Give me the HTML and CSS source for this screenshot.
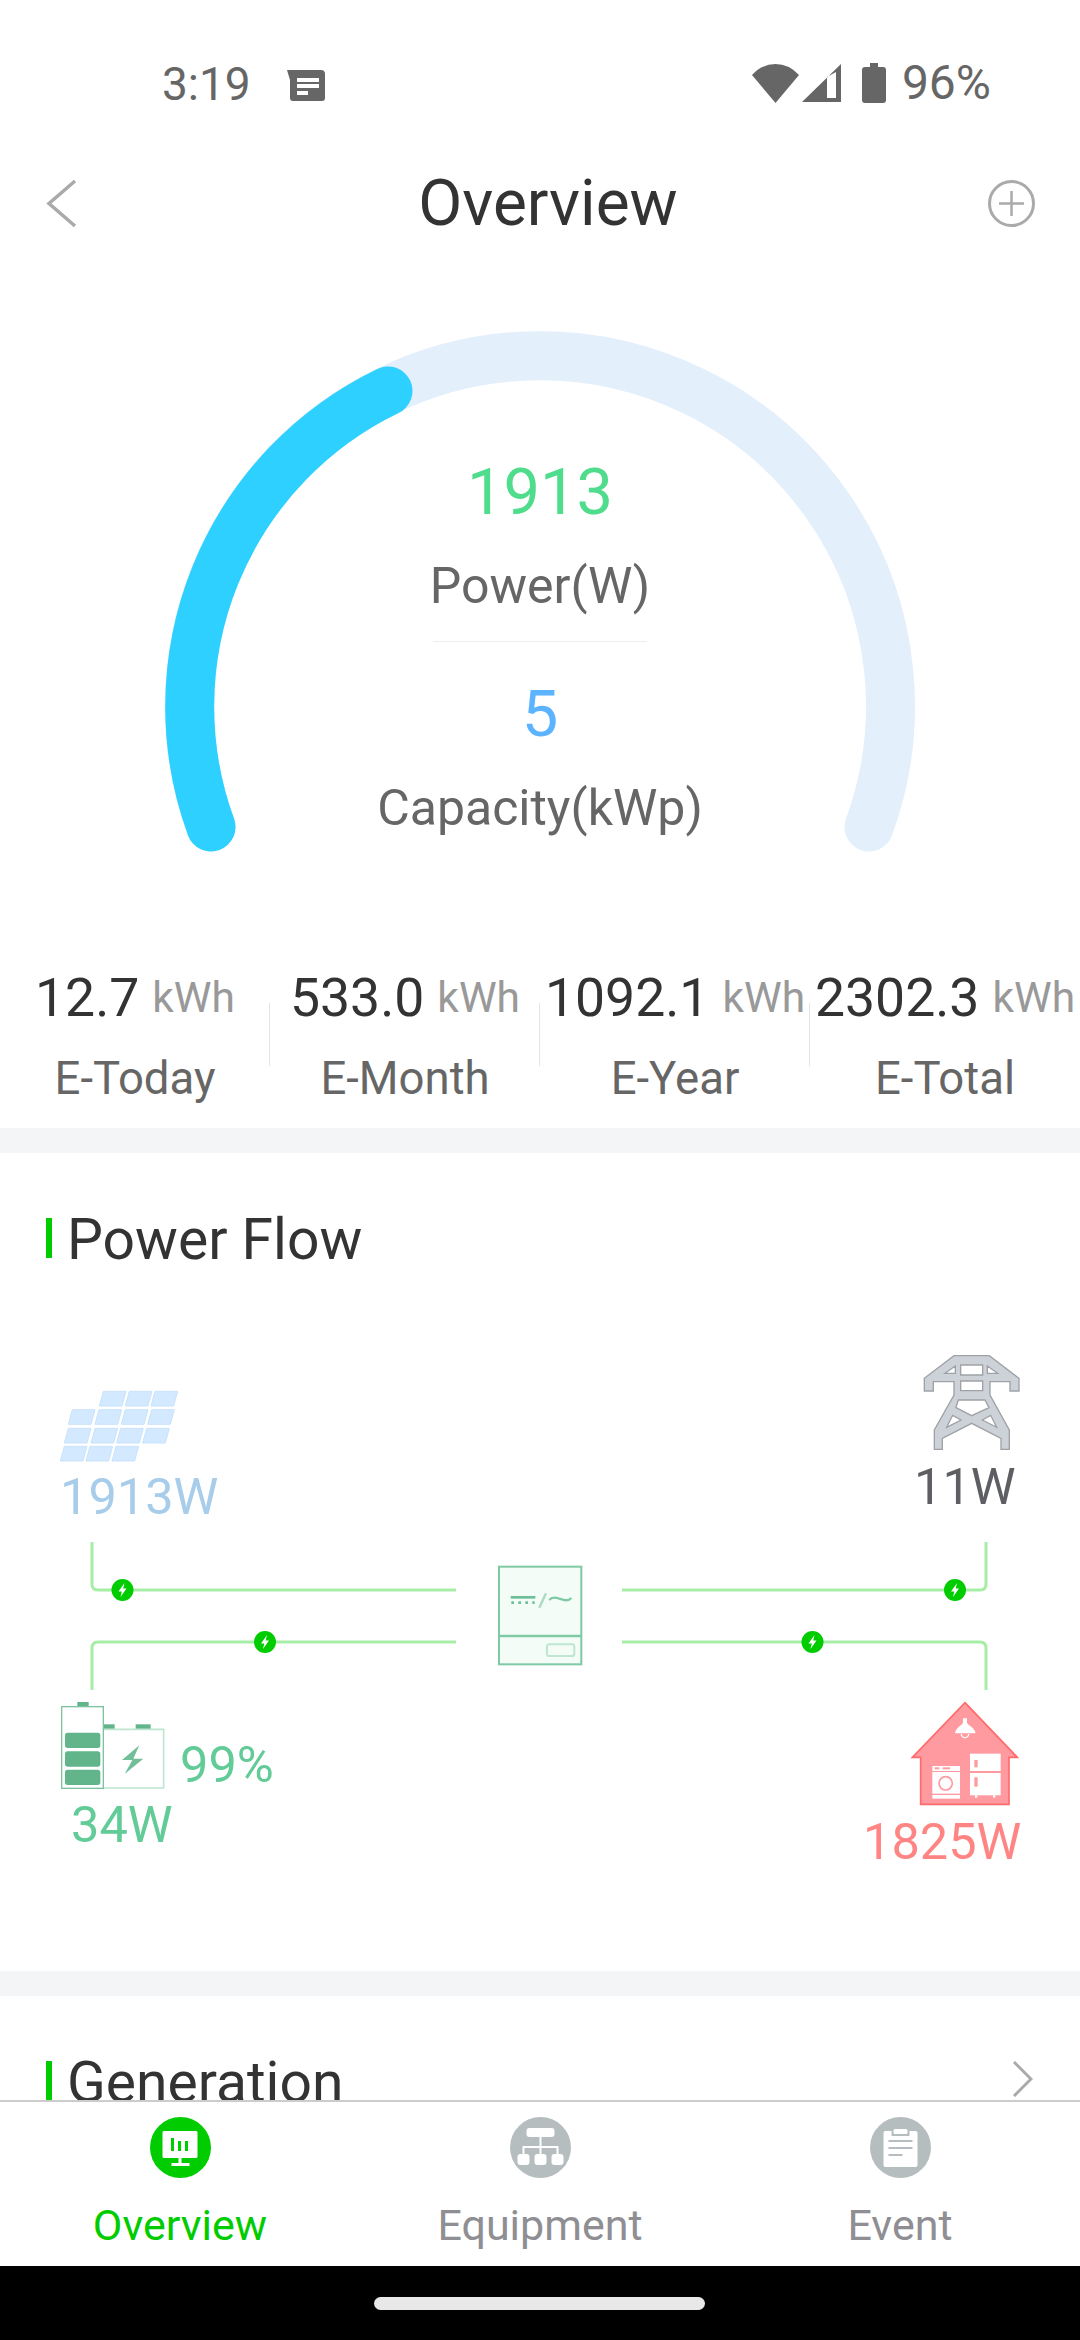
FILE: index.html
```html
<!DOCTYPE html>
<html lang="en">
<head>
    <meta charset="UTF-8">
    <meta name="viewport" content="width=device-width, initial-scale=1.0">
    <title>Overview</title>
    <link rel="stylesheet" href="styles.css">
</head>
<body>
    <div class="app">
        <div class="status-bar">
            <span class="status-time">3:19</span>
            <svg class="status-note" width="38" height="31" viewBox="0 0 38 31">
                <path d="M0 0H34Q38 0 38 4V28Q38 31 35 31H6Q3 31 3 28V10Z" fill="#666"/>
                <rect x="10" y="8" width="22" height="4" fill="#fff"/>
                <rect x="10" y="14" width="22" height="4" fill="#fff"/>
                <rect x="10" y="21" width="11" height="4" fill="#fff"/>
            </svg>
            <div class="status-right">
                <svg width="47" height="39" viewBox="0 0 47 39"><path d="M23.5 39L0 11Q10 0 23.5 0T47 11Z" fill="#666"/></svg>
                <svg width="39" height="38" viewBox="0 0 39 38"><path fill-rule="evenodd" d="M39 0V38H0ZM25 13V34H34V8Z" fill="#666"/></svg>
                <svg width="24" height="40" viewBox="0 0 24 40"><path d="M8 0H16V4H21Q24 4 24 7V37Q24 40 21 40H3Q0 40 0 37V7Q0 4 3 4H8Z" fill="#666"/></svg>
                <span class="status-battery">96%</span>
            </div>
        </div>

        <header class="nav-bar">
            <svg class="nav-back" width="31" height="49" viewBox="0 0 31 49"><path d="M29 2L3 24.5L29 47" fill="none" stroke="#aaa" stroke-width="3.5"/></svg>
            <h1>Overview</h1>
            <svg class="nav-add" width="47" height="47" viewBox="0 0 47 47">
                <circle cx="23.5" cy="23.5" r="22" fill="none" stroke="#aaa" stroke-width="3"/>
                <path d="M23.5 11V36M11 23.5H36" stroke="#aaa" stroke-width="2.5"/>
            </svg>
        </header>

        <main class="content">
            <section class="gauge">
                <svg class="gauge-arc" width="1080" height="667" viewBox="0 263 1080 667">
                    <path d="M211 827A350.5 350.5 0 1 1 869 827" fill="none" stroke="#e4effc" stroke-width="49" stroke-linecap="round"/>
                    <path d="M211 827A350.5 350.5 0 0 1 388 391" fill="none" stroke="#2dd0ff" stroke-width="49" stroke-linecap="round"/>
                </svg>
                <div class="gauge-value gauge-power">1913</div>
                <div class="gauge-label gauge-label-power">Power(W)</div>
                <div class="gauge-line"></div>
                <div class="gauge-value gauge-capacity">5</div>
                <div class="gauge-label gauge-label-capacity">Capacity(kWp)</div>
            </section>

            <section class="stats">
                <div class="stat">
                    <div class="stat-value">12.7<span class="stat-unit">kWh</span></div>
                    <div class="stat-label">E-Today</div>
                </div>
                <div class="stat">
                    <div class="stat-value">533.0<span class="stat-unit">kWh</span></div>
                    <div class="stat-label">E-Month</div>
                </div>
                <div class="stat">
                    <div class="stat-value">1092.1<span class="stat-unit">kWh</span></div>
                    <div class="stat-label">E-Year</div>
                </div>
                <div class="stat">
                    <div class="stat-value">2302.3<span class="stat-unit">kWh</span></div>
                    <div class="stat-label">E-Total</div>
                </div>
            </section>

            <section class="panel panel-flow">
                <h2 class="panel-title">Power Flow</h2>
                <div class="flow-canvas">
                    <svg class="flow-lines" width="1080" height="560" viewBox="0 1300 1080 560">
                        <defs>
                            <g id="bolt">
                                <circle r="11" fill="#00cc00"/>
                                <path d="M2-7L-4 1.5H-.7L-2 7L4-1.5H.7Z" fill="#fff"/>
                            </g>
                            <polygon id="cell" points="12,0 80,0 68,44 0,44" fill="#d3e9ff" stroke="#c9e2f9" stroke-width="3" stroke-linejoin="round"/>
                        </defs>

                        <!-- lines -->
                        <g fill="none" stroke="#a6eda6" stroke-width="3">
                            <path d="M92 1542V1584Q92 1590 98 1590H456"/>
                            <path d="M986 1542V1584Q986 1590 980 1590H622"/>
                            <path d="M92 1690V1648Q92 1642 98 1642H456"/>
                            <path d="M986 1690V1648Q986 1642 980 1642H622"/>
                        </g>
                        <use href="#bolt" x="122.5" y="1590"/>
                        <use href="#bolt" x="955" y="1590"/>
                        <use href="#bolt" x="265" y="1642"/>
                        <use href="#bolt" x="812.5" y="1642"/>

                        <!-- solar -->
                        <g transform="translate(30 1340) scale(.3333)">
                            <use href="#cell" x="208" y="154"/>
                            <use href="#cell" x="286" y="154"/>
                            <use href="#cell" x="363" y="154"/>
                            <use href="#cell" x="115" y="209"/>
                            <use href="#cell" x="195" y="209"/>
                            <use href="#cell" x="274" y="209"/>
                            <use href="#cell" x="353" y="209"/>
                            <use href="#cell" x="103" y="265"/>
                            <use href="#cell" x="183" y="265"/>
                            <use href="#cell" x="260" y="265"/>
                            <use href="#cell" x="338" y="265"/>
                            <use href="#cell" x="91" y="319"/>
                            <use href="#cell" x="168" y="319"/>
                            <use href="#cell" x="246" y="319"/>
                        </g>

                        <!-- grid tower -->
                        <g transform="translate(880 1340) scale(.3333)">
                            <path fill-rule="evenodd" fill="#cdd2d8" stroke="#9ea2a6" stroke-width="4" d="M222 47H328L417 115V153H390V125H330V165L388 270V328H363V295L275 250L187 295V328H163V270L222 165V125H160V153H133V115ZM242 75V105H308V75ZM242 123V152H308V123ZM195 100H226V78ZM322 78V100H353ZM235 180L228 203L275 227L327 203L315 180ZM200 262L243 240L218 226ZM307 240L350 262L332 226Z"/>
                        </g>

                        <!-- inverter -->
                        <g transform="translate(440 1540) scale(.3333)">
                            <rect x="177" y="80" width="247" height="293" fill="#f3fcf7" stroke="#7fc9a5" stroke-width="6"/>
                            <path d="M177 288H424" stroke="#7fc9a5" stroke-width="7"/>
                            <rect x="321" y="313" width="82" height="35" rx="7" fill="none" stroke="#bfe6d2" stroke-width="6"/>
                            <rect x="212" y="168" width="74" height="8" fill="#6fc09a"/>
                            <path d="M214 188H284" stroke="#6fc09a" stroke-width="8" stroke-dasharray="8 13"/>
                            <path d="M318 160L298 203" stroke="#a8dcc2" stroke-width="7"/>
                            <path d="M328 180C345 158 375 195 394 174" fill="none" stroke="#7fc9a5" stroke-width="7"/>
                        </g>

                        <!-- battery -->
                        <g transform="translate(40 1680) scale(.3333)">
                            <rect x="190" y="133" width="34" height="15" fill="#62b48b"/>
                            <rect x="287" y="133" width="45" height="15" fill="#62b48b"/>
                            <rect x="112" y="66" width="34" height="14" fill="#62b48b"/>
                            <path d="M190 148H371V324H190" fill="none" stroke="#bde6d0" stroke-width="5"/>
                            <rect x="65" y="80" width="125" height="245" fill="#fff" stroke="#7cc3a0" stroke-width="4"/>
                            <rect x="75" y="158" width="106" height="46" rx="8" fill="#62b48b"/>
                            <rect x="75" y="214" width="106" height="46" rx="8" fill="#62b48b"/>
                            <rect x="75" y="269" width="106" height="46" rx="8" fill="#62b48b"/>
                            <path d="M298 196L246 240H277L254 282L310 236H280Z" fill="#72c09a"/>
                        </g>

                        <!-- house -->
                        <g transform="translate(840 1680) scale(.3333)">
                            <path d="M375 68L532 232H507V373H242V232H217Z" fill="#ff9aa0" stroke="#ff6a6a" stroke-width="5"/>
                            <path d="M345 160C348 142 366 136 369 128V115H381V128C384 136 404 142 407 160Z" fill="#fff"/>
                            <path d="M364 162A11 11 0 0 0 386 162" fill="none" stroke="#fff" stroke-width="4"/>
                            <rect x="390" y="221" width="92" height="52" fill="#fff"/>
                            <rect x="390" y="279" width="92" height="67" fill="#fff"/>
                            <rect x="403" y="240" width="10" height="22" fill="#ff9aa0"/>
                            <rect x="403" y="292" width="10" height="28" fill="#ff9aa0"/>
                            <rect x="405" y="346" width="7" height="7" fill="#fff"/>
                            <rect x="459" y="346" width="7" height="7" fill="#fff"/>
                            <rect x="277" y="258" width="83" height="15" fill="#fff"/>
                            <rect x="284" y="262" width="14" height="6" fill="#ff9aa0"/>
                            <rect x="308" y="262" width="22" height="6" fill="#ff9aa0"/>
                            <rect x="277" y="276" width="83" height="65" fill="#fff"/>
                            <rect x="277" y="345" width="83" height="11" fill="#fff"/>
                            <circle cx="317" cy="310" r="20" fill="none" stroke="#ff9aa0" stroke-width="5"/>
                        </g>
                    </svg>

                    <span class="flow-value flow-solar">1913W</span>
                    <span class="flow-value flow-grid">11W</span>
                    <span class="flow-value flow-soc">99%</span>
                    <span class="flow-value flow-battery">34W</span>
                    <span class="flow-value flow-load">1825W</span>
                </div>
            </section>

            <section class="panel">
                <div class="panel-head">
                    <h2 class="panel-title">Generation</h2>
                    <svg width="21" height="36" viewBox="0 0 21 36"><path d="M2 1L19 18L2 35" fill="none" stroke="#aaa" stroke-width="3"/></svg>
                </div>
            </section>
        </main>

        <nav class="tab-bar">
            <div class="tab tab-active">
                <svg width="61" height="61" viewBox="0 0 61 61">
                    <circle cx="30.5" cy="30.5" r="30.5" fill="#00cc00"/>
                    <rect x="12.5" y="14" width="35" height="27" rx="1.5" fill="#fff"/>
                    <rect x="28.5" y="41" width="3" height="5" fill="#fff"/>
                    <rect x="21.5" y="46" width="18" height="3" fill="#fff"/>
                    <rect x="21" y="21" width="3" height="13" fill="#00cc00"/>
                    <rect x="28" y="24" width="3" height="10" fill="#00cc00"/>
                    <rect x="35" y="24" width="3" height="10" fill="#00cc00"/>
                </svg>
                <span>Overview</span>
            </div>
            <div class="tab">
                <svg width="61" height="61" viewBox="0 0 61 61">
                    <circle cx="30.5" cy="30.5" r="30.5" fill="#b5bdbf"/>
                    <rect x="16.5" y="11" width="28" height="9" rx="3" fill="#fff"/>
                    <path d="M30.5 20V37M13.5 37V30H47.5V37" fill="none" stroke="#fff" stroke-width="2"/>
                    <rect x="7.5" y="37" width="12" height="11" rx="3" fill="#fff"/>
                    <rect x="24.5" y="37" width="12" height="11" rx="3" fill="#fff"/>
                    <rect x="41.5" y="37" width="12" height="11" rx="3" fill="#fff"/>
                </svg>
                <span>Equipment</span>
            </div>
            <div class="tab">
                <svg width="61" height="61" viewBox="0 0 61 61">
                    <circle cx="30.5" cy="30.5" r="30.5" fill="#b5bdbf"/>
                    <rect x="13.5" y="14" width="34" height="36" rx="2" fill="#fff"/>
                    <rect x="21.5" y="13" width="18" height="6" fill="#b5bdbf"/>
                    <rect x="23.5" y="12" width="14" height="5" rx="1.5" fill="#fff"/>
                    <rect x="18.5" y="23" width="24" height="2" fill="#b5bdbf"/>
                    <rect x="18.5" y="30" width="24" height="2" fill="#b5bdbf"/>
                    <rect x="18.5" y="37" width="14" height="2" fill="#b5bdbf"/>
                </svg>
                <span>Event</span>
            </div>
        </nav>

        <div class="gesture-bar"><div class="gesture-pill"></div></div>
    </div>
</body>
</html>
```

FILE: styles.css
```css
:root {
    --green: #00cc00;
    --band: #f4f5f7;
    --text-dark: #333333;
    --text-mid: #666666;
    --text-light: #999999;
}

* {
    box-sizing: border-box;
    margin: 0;
    padding: 0;
    font-family: Roboto, sans-serif;
}

body {
    background-color: #fff;
}

.app {
    width: 1080px;
    height: 2340px;
    display: flex;
    flex-direction: column;
    overflow: hidden;
}

/* status bar */
.status-bar {
    height: 143px;
    display: flex;
    align-items: flex-start;
    padding: 58px 89px 0 162px;
    color: var(--text-mid);
}

.status-time {
    font-size: 46px;
    line-height: 52px;
}

.status-note {
    margin: 12px 0 0 36px;
}

.status-right {
    margin-left: auto;
    display: flex;
    align-items: center;
    gap: 10px;
    margin-top: 5px;
}

.status-right svg:first-child {
    margin-right: -7px;
}

.status-right svg:nth-child(2) {
    margin-right: 11px;
}

.status-battery {
    font-size: 48px;
    line-height: 40px;
    margin-left: 6px;
}

/* nav bar */
.nav-bar {
    height: 120px;
    flex-shrink: 0;
    display: flex;
    align-items: center;
    justify-content: space-between;
    padding: 0 45px 0 46px;
    position: relative;
}

.nav-bar h1 {
    font-size: 64px;
    font-weight: 400;
    color: var(--text-dark);
    position: absolute;
    left: 548px;
    top: 23px;
    transform: translateX(-50%);
}

.content {
    flex: 1;
    min-height: 0;
    overflow: hidden;
}

/* gauge */
.gauge {
    height: 667px;
    padding-top: 193px;
    position: relative;
    text-align: center;
}

.gauge-arc {
    position: absolute;
    left: 0;
    top: 0;
}

.gauge-value {
    position: relative;
    font-size: 65px;
    line-height: 72px;
}

.gauge-power {
    color: #4fdc8c;
}

.gauge-capacity {
    color: #5cb3ff;
    margin-top: 36px;
}

.gauge-label {
    position: relative;
    font-size: 50px;
    line-height: 60px;
    color: var(--text-mid);
}

.gauge-label-power {
    margin-top: 28px;
}

.gauge-label-capacity {
    margin-top: 28px;
}

.gauge-line {
    width: 214px;
    height: 1px;
    background-color: #eeeeee;
    margin: 25px auto 0;
}

/* stats */
.stats {
    height: 223px;
    padding-top: 38px;
    display: grid;
    grid-template-columns: repeat(4, 270px);
    border-bottom: 25px solid var(--band);
}

.stat {
    text-align: center;
    position: relative;
    white-space: nowrap;
}

.stat:not(:last-child)::after {
    content: "";
    position: absolute;
    right: 0;
    top: 35px;
    height: 63px;
    width: 1px;
    background-color: #e5e5e5;
}

.stat-value {
    font-size: 53.5px;
    line-height: 60px;
    color: var(--text-dark);
    display: flex;
    justify-content: center;
}

.stat-unit {
    font-size: 42.5px;
    color: var(--text-light);
    margin-left: 13px;
    line-height: 60px;
    align-self: baseline;
}

.stat-label {
    font-size: 45.5px;
    line-height: 56px;
    color: var(--text-mid);
    margin-top: 23px;
}

/* panels */
.panel {
    padding: 65px 46px 0;
}

.panel-flow {
    height: 843px;
    border-bottom: 25px solid var(--band);
    position: relative;
}

.panel-head {
    display: flex;
    justify-content: space-between;
    align-items: flex-start;
    padding-right: 1px;
}

.panel-title {
    font-size: 57px;
    font-weight: 400;
    line-height: 43px;
    height: 40px;
    color: var(--text-dark);
    border-left: 6px solid var(--green);
    padding-left: 15px;
}

.flow-canvas {
    position: absolute;
    left: 0;
    top: 147px;
    width: 1080px;
    height: 560px;
}

.flow-lines {
    position: absolute;
    left: 0;
    top: 0;
}

.flow-value {
    position: absolute;
    font-size: 50.5px;
    line-height: 48px;
}

.flow-solar {
    left: 60px;
    top: 173px;
    color: #a8cdea;
}

.flow-grid {
    left: 914px;
    top: 163px;
    color: #5d5f63;
}

.flow-soc {
    left: 180px;
    top: 441px;
    color: #62cb97;
}

.flow-battery {
    left: 71px;
    top: 501px;
    color: #62cb97;
}

.flow-load {
    left: 863px;
    top: 518px;
    color: #ff8585;
}

/* bottom tabs */
.tab-bar {
    height: 166px;
    flex-shrink: 0;
    border-top: 2px solid #cccccc;
    background-color: #fff;
    display: grid;
    grid-template-columns: 360px 360px 360px;
    padding-top: 15px;
}

.tab {
    display: flex;
    flex-direction: column;
    align-items: center;
    font-size: 43px;
    line-height: 50px;
    color: #8e8e93;
}

.tab span {
    margin-top: 22px;
}

.tab-active {
    color: var(--green);
}

.gesture-bar {
    height: 74px;
    flex-shrink: 0;
    background-color: #000;
    padding-top: 31px;
}

.gesture-pill {
    width: 331px;
    height: 13px;
    margin-left: 374px;
    border-radius: 7px;
    background-color: #e8e8e8;
}
```
